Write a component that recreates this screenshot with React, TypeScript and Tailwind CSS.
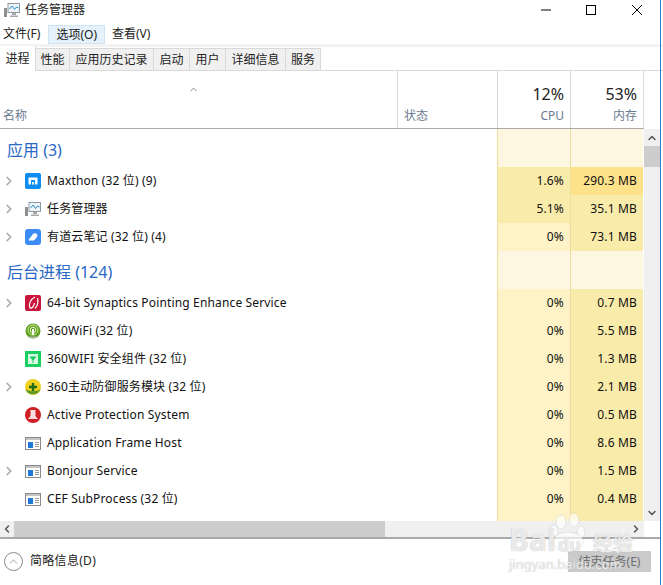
import React from 'react';
import { ChevronRight, ChevronUp, ChevronDown, ChevronLeft } from 'lucide-react';

const FONT = '"Noto Sans", "Noto Sans CJK SC", sans-serif';

const TaskIcon = () => (
  <svg width="16" height="16" viewBox="0 0 16 16">
    <rect x="0" y="6" width="3" height="9" fill="#8f8f8f" />
    <rect x="4" y="1.500" width="11.500" height="9" fill="#eef4f8" stroke="#8d9aa3" />
    <path d="M5.500 7l2.500-3 2.500 3.500 2-2.500 2 1" fill="none" stroke="#2f8fc8" />
    <path d="M8 11h4v2H8zM6 13.500h8V15H6z" fill="#a8a8a8" />
  </svg>
);

const FrameIcon = () => (
  <svg width="16" height="13" viewBox="0 0 16 13">
    <rect x="0.500" y="0.500" width="15" height="12" fill="#fff" stroke="#8a8a8a" />
    <rect x="1" y="1" width="14" height="2" fill="#c4c4c4" />
    <rect x="3" y="5" width="5" height="6" fill="#1e78d8" />
    <path d="M10 5.500h4M10 7.500h4M10 9.500h4" stroke="#9a9a9a" />
  </svg>
);

const icons: Record<string, React.ReactNode> = {
  maxthon: (
    <svg width="16" height="16" viewBox="0 0 16 16">
      <rect width="16" height="16" rx="2" fill="#0f8cf0" />
      <path d="M3.500 11.500V4.500h9v7H10V7H6v4.500z" fill="#fff" />
      <rect x="7" y="9" width="2" height="2.500" fill="#fff" />
    </svg>
  ),
  task: <TaskIcon />,
  note: (
    <svg width="16" height="16" viewBox="0 0 16 16">
      <rect width="16" height="16" rx="3" fill="#3d8bf5" />
      <path d="M3.500 11l4.500-6c1-1 3-1 4 0 .500 1 .500 2 0 3l-3 3.500H4z" fill="#fff" />
    </svg>
  ),
  synaptics: (
    <svg width="16" height="16" viewBox="0 0 16 16">
      <rect width="16" height="16" rx="2" fill="#c8173a" />
      <path d="M10 2C6 4 3 9 5 13c2 1 4-2 4.500-5M12.500 3c1 4 .500 7-2.500 10.500" fill="none" stroke="#fff" strokeWidth="1.200" />
    </svg>
  ),
  wifi: (
    <svg width="16" height="16" viewBox="0 0 16 16">
      <circle cx="8" cy="8" r="7.500" fill="#5f9f22" />
      <path d="M3 13c3 3 7 3 10 0-3 1-7 1-10 0z" fill="#b5b5b5" />
      <circle cx="8" cy="7" r="5" fill="none" stroke="#cdeb98" />
      <circle cx="8" cy="7" r="2.800" fill="none" stroke="#e6f6c8" />
      <path d="M8 6v6" stroke="#fff" strokeWidth="2" />
    </svg>
  ),
  wifisafe: (
    <svg width="16" height="16" viewBox="0 0 16 16">
      <rect width="16" height="16" fill="#19d05f" />
      <rect x="3" y="3" width="10" height="10" fill="#d9f8e4" />
      <path d="M5 6h6l-3 3zM8 9v3" stroke="#19d05f" fill="#19d05f" />
    </svg>
  ),
  guard: (
    <svg width="16" height="16" viewBox="0 0 16 16">
      <circle cx="8" cy="8" r="8" fill="#f0d020" />
      <path d="M0.500 10c2 7 13 7 15 0-3 3-11 3-15 0z" fill="#5c9a25" />
      <path d="M8 4v8M4 8h8" stroke="#1f6d16" strokeWidth="2.400" />
    </svg>
  ),
  active: (
    <svg width="16" height="16" viewBox="0 0 16 16">
      <circle cx="8" cy="8" r="8" fill="#d01f25" />
      <path d="M5.500 3h5v6l2.500 3H3l2.500-3z" fill="#f6dcdc" />
    </svg>
  ),
  frame: <FrameIcon />,
};

const Group = ({ label }: { label: string }) => (
  <div className="flex h-[38px]">
    <div className="w-[497px] pl-[7px] pt-[7px] text-[16px] leading-[28px] text-[#2a68c4] whitespace-pre">{label}</div>
    <div className="w-[73px] border-l border-[#f0dba0] bg-[#fdf6e0]" />
    <div className="w-[73px] border-l border-[#f0dba0] bg-[#fdf6e0]" />
  </div>
);

type RowData = { icon: string; name: string; arrow?: boolean; cpu: string; mem: string; cpuBg: string; memBg: string };

const Row = ({ icon, name, arrow, cpu, mem, cpuBg, memBg }: RowData) => (
  <div className="flex h-[28px] text-[12px] leading-[28px] tracking-[0.15px] text-[#111]">
    <div className="flex w-[497px] items-center">
      <div className="flex w-[25px] justify-center pr-[8px]">
        {arrow && <ChevronRight size={14} strokeWidth={3} color="#aaaaaa" />}
      </div>
      <div className="flex w-[16px] justify-center">{icons[icon]}</div>
      <div className="ml-[6px] whitespace-pre">{name}</div>
    </div>
    <div className={`w-[73px] border-l border-[#f0dba0] pr-[6px] text-right ${cpuBg}`}>{cpu}</div>
    <div className={`w-[73px] border-l border-[#f0dba0] pr-[6px] text-right ${memBg}`}>{mem}</div>
  </div>
);

const LOW = 'bg-[#fdf3c6]';
const MID = 'bg-[#f9ecaa]';
const rowsApps: RowData[] = [
  { icon: 'maxthon', name: 'Maxthon (32 位) (9)', arrow: true, cpu: '1.6%', mem: '290.3 MB', cpuBg: MID, memBg: 'bg-[#fde28a]' },
  { icon: 'task', name: '任务管理器', arrow: true, cpu: '5.1%', mem: '35.1 MB', cpuBg: MID, memBg: MID },
  { icon: 'note', name: '有道云笔记 (32 位) (4)', arrow: true, cpu: '0%', mem: '73.1 MB', cpuBg: LOW, memBg: MID },
];
const rowsBack: RowData[] = [
  { icon: 'synaptics', name: '64-bit Synaptics Pointing Enhance Service', arrow: true, cpu: '0%', mem: '0.7 MB', cpuBg: LOW, memBg: MID },
  { icon: 'wifi', name: '360WiFi (32 位)', cpu: '0%', mem: '5.5 MB', cpuBg: LOW, memBg: MID },
  { icon: 'wifisafe', name: '360WIFI 安全组件 (32 位)', cpu: '0%', mem: '1.3 MB', cpuBg: LOW, memBg: MID },
  { icon: 'guard', name: '360主动防御服务模块 (32 位)', arrow: true, cpu: '0%', mem: '2.1 MB', cpuBg: LOW, memBg: MID },
  { icon: 'active', name: 'Active Protection System', cpu: '0%', mem: '0.5 MB', cpuBg: LOW, memBg: MID },
  { icon: 'frame', name: 'Application Frame Host', cpu: '0%', mem: '8.6 MB', cpuBg: LOW, memBg: MID },
  { icon: 'frame', name: 'Bonjour Service', arrow: true, cpu: '0%', mem: '1.5 MB', cpuBg: LOW, memBg: MID },
  { icon: 'frame', name: 'CEF SubProcess (32 位)', cpu: '0%', mem: '0.4 MB', cpuBg: LOW, memBg: MID },
];

const tabs = [
  { label: '性能', width: 'w-[34px]' },
  { label: '应用历史记录', width: 'w-[84px]' },
  { label: '启动', width: 'w-[36px]' },
  { label: '用户', width: 'w-[36px]' },
  { label: '详细信息', width: 'w-[60px]' },
  { label: '服务', width: 'w-[35px]' },
];

export default function App() {
  return (
    <div className="relative flex h-[585px] w-[663px] flex-col overflow-hidden bg-white" style={{ fontFamily: FONT }}>
      <div className="flex h-[22px] items-center justify-between pb-[3px] text-[12px] text-[#222]">
        <div className="flex items-center pl-[4px]">
          <TaskIcon />
          <span className="ml-[5px]">任务管理器</span>
        </div>
        <div className="flex items-center pr-[21px]">
          <svg width="10" height="10" viewBox="0 0 10 10"><path d="M0 5h10" stroke="#000" /></svg>
          <svg width="10" height="10" viewBox="0 0 10 10" className="ml-[35px]"><rect x="0.500" y="0.500" width="9" height="9" fill="none" stroke="#000" /></svg>
          <svg width="10" height="10" viewBox="0 0 10 10" className="ml-[36px]"><path d="M0 0l10 10M10 0L0 10" stroke="#000" /></svg>
        </div>
      </div>

      <div className="flex h-[22px] items-center pt-[2px] text-[12px] text-[#222]">
        <span className="pl-[3px] pr-[8px]">文件(F)</span>
        <span className="border border-[#cde4f7] bg-[#e5f1fb] px-[7px] leading-[17px]">选项(O)</span>
        <span className="pl-[7px]">查看(V)</span>
      </div>

      <div className="flex h-[27px] items-end border-t-[3px] border-b border-t-[#f3f3f3] border-b-[#d9d9d9] text-[12px] text-[#222]">
        <div className="z-10 -mb-px flex h-[25px] w-[36px] items-center justify-center border-r border-[#d9d9d9] bg-white">进程</div>
        {tabs.map((t) => (
          <div key={t.label} className={`flex h-[22px] items-center justify-center border-t border-r border-[#d9d9d9] bg-[#f0f0f0] ${t.width}`}>{t.label}</div>
        ))}
      </div>

      <div className="flex h-[58px] w-[644px] border-b border-[#a9a9a9] text-[12px] text-[#6b7a90]">
        <div className="relative w-[398px] border-r border-[#d9d9d9] pl-[3px] pt-[36px]">
          名称
          <ChevronUp size={11} color="#777" className="absolute left-[188px] top-[13px]" />
        </div>
        <div className="w-[100px] border-r border-[#d9d9d9] pl-[6px] pt-[36px]">状态</div>
        <div className="w-[73px] border-r border-[#d9d9d9] pr-[6px] text-right">
          <div className="h-[36px] pt-[12px] text-[16px] leading-[22px] text-[#222]">12%</div>
          <div>CPU</div>
        </div>
        <div className="w-[73px] border-r border-[#d9d9d9] pr-[6px] text-right">
          <div className="h-[36px] pt-[12px] text-[16px] leading-[22px] text-[#222]">53%</div>
          <div>内存</div>
        </div>
      </div>

      <div className="flex h-[392px] w-[660px]">
        <div className="h-[392px] w-[644px] overflow-hidden">
          <Group label="应用 (3)" />
          {rowsApps.map((r) => <Row key={r.name} {...r} />)}
          <Group label="后台进程 (124)" />
          {rowsBack.map((r) => <Row key={r.name} {...r} />)}
          <Row icon="frame" name="" cpu="" mem="" cpuBg={LOW} memBg={MID} />
        </div>
        <div className="flex w-[16px] flex-col bg-[#f0f0f0]">
          <div className="flex h-[17px] items-center justify-center"><ChevronUp size={12} strokeWidth={3} color="#555" /></div>
          <div className="h-[21px] bg-[#cdcdcd]" />
          <div className="flex-1" />
          <div className="flex h-[17px] items-center justify-center"><ChevronDown size={12} strokeWidth={3} color="#555" /></div>
        </div>
      </div>

      <div className="flex h-[16px] w-[644px] bg-[#f0f0f0]">
        <div className="flex w-[14px] items-center justify-center"><ChevronLeft size={12} strokeWidth={3} color="#555" /></div>
        <div className="w-[371px] bg-[#cdcdcd]" />
        <div className="flex flex-1 items-center justify-end pr-[2px]"><ChevronRight size={12} strokeWidth={3} color="#555" /></div>
      </div>

      <div className="flex w-[660px] flex-1 items-center justify-between border-t-2 border-[#a9a9a9] pb-[2px]">
        <div className="flex items-center pl-[4px] text-[12px] tracking-[0.3px] text-[#222]">
          <span className="flex h-[19px] w-[19px] items-center justify-center rounded-full border border-[#8a8a8a]"><ChevronUp size={13} strokeWidth={1.500} color="#8a8a8a" /></span>
          <span className="ml-[7px]">简略信息(D)</span>
        </div>
        <div className="mr-[9px] mt-[1px] flex h-[21px] w-[83px] items-center justify-center bg-[#cacaca] text-[12px] text-[#6f6f6f]">结束任务(E)</div>
      </div>

      <div className="absolute bottom-0 right-[2px] top-0 w-px bg-[#2b7cc4]" />

      {/* baidu watermark over the window */}
      <svg width="44" height="44" viewBox="0 0 44 44" className="pointer-events-none absolute left-[548px] top-[510px]">
        <g fill="#ffffff" fillOpacity="0.65" stroke="#b5b5b5" strokeOpacity="0.3">
          <ellipse cx="13" cy="12" rx="5" ry="7" />
          <ellipse cx="26" cy="10" rx="5" ry="7" />
          <ellipse cx="6" cy="21" rx="4" ry="6" />
          <ellipse cx="33" cy="22" rx="4" ry="6" />
          <ellipse cx="20" cy="32" rx="15" ry="10" />
        </g>
      </svg>
      <div className="pointer-events-none absolute left-[509px] top-[524px] text-[#ffffff]/75">
        <div className="flex items-baseline font-bold [text-shadow:0_0_1px_#aaa]">
          <span className="text-[30px] leading-[32px]">Bai</span>
          <span className="ml-[2px] text-[18px] leading-[32px]">du</span>
          <span className="ml-[12px] text-[20px] leading-[32px]">经验</span>
        </div>
        <div className="-mt-[4px] text-[13px] leading-[16px] [text-shadow:0_0_1px_#aaa]">jingyan.baidu.com</div>
      </div>
    </div>
  );
}
